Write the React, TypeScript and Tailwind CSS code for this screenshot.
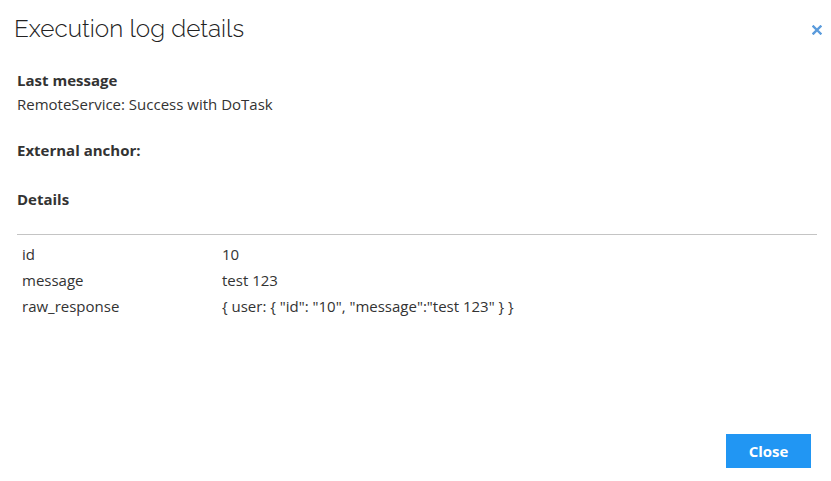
export default function App() {
  const rows = [
    ["id", "10"],
    ["message", "test 123"],
    ["raw_response", '{ user: { "id": "10", "message":"test 123" } }'],
  ];

  return (
    <div className="relative flex h-[481px] w-[831px] flex-col bg-white text-[#333] font-['Open_Sans',sans-serif]">
      <div className="flex items-start justify-between pl-[14px] pr-[9px] pt-[12px]">
        <h1 className="font-['Raleway','Lato',sans-serif] text-[24.3px] font-light leading-[34px] text-[#222]">
          Execution log details
        </h1>
        <button className="mt-[13px] flex h-[10px] w-[10px] items-center justify-center">
          <svg viewBox="0 0 10 10" className="h-[10px] w-[10px]">
            <path d="M1.5 1.5 L8.5 8.5 M8.5 1.5 L1.5 8.5" stroke="#5a9bdc" strokeWidth="2.4" strokeLinecap="square" />
          </svg>
        </button>
      </div>

      <div className="pl-[17px] pr-[14px] pt-[22px] text-[15px] leading-[24px]">
        <div className="font-bold">Last message</div>
        <div>RemoteService: Success with DoTask</div>
        <div className="mt-[22px] font-bold">External anchor:</div>
        <div className="mt-[25px] font-bold">Details</div>
        <div className="mt-[23px] border-t border-[#c4c4c4] pt-[6px]">
          {rows.map(([k, v]) => (
            <div key={k} className="flex h-[26px] items-center px-[5px]">
              <div className="w-[200px]">{k}</div>
              <div>{v}</div>
            </div>
          ))}
        </div>
      </div>

      <div className="mt-auto flex justify-end pb-[13px] pr-[20px]">
        <button className="h-[34px] w-[85px] bg-[#2196f3] text-[15px] font-bold text-white">
          Close
        </button>
      </div>
    </div>
  );
}
